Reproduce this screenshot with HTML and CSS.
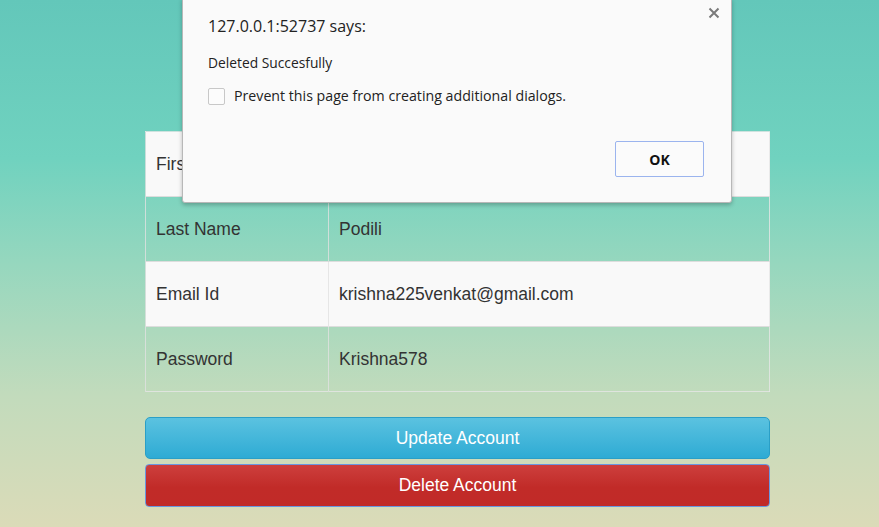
FILE: index.html
```html
<!DOCTYPE html>
<html>
<head>
<meta charset="utf-8">
<title>Account</title>
<link rel="stylesheet" href="styles.css">
</head>
<body>
<main class="page">
  <table class="details">
    <tbody>
      <tr><td class="label">First Name</td><td>Venkat Krishna</td></tr>
      <tr><td class="label">Last Name</td><td>Podili</td></tr>
      <tr><td class="label">Email Id</td><td>krishna225venkat@gmail.com</td></tr>
      <tr><td class="label">Password</td><td>Krishna578</td></tr>
    </tbody>
  </table>
  <div class="actions">
    <button class="btn btn-info">Update Account</button>
    <button class="btn btn-danger">Delete Account</button>
  </div>
</main>

<div class="dialog">
  <svg class="dialog-close" width="12" height="12" viewBox="0 0 12 12"><path d="M1.5 1.5 L10.5 10.5 M10.5 1.5 L1.5 10.5" stroke="#7a7a7a" stroke-width="2" fill="none"/></svg>
  <div class="dialog-title">127.0.0.1:52737 says:</div>
  <div class="dialog-message">Deleted Succesfully</div>
  <label class="dialog-check"><span class="box"></span><span>Prevent this page from creating additional dialogs.</span></label>
  <div class="dialog-footer"><button class="ok">OK</button></div>
</div>
</body>
</html>
```
FILE: styles.css
```css
html, body {
  margin: 0;
  height: 100%;
}
body {
  background: linear-gradient(180deg, #63c7ba 0%, #70d2bf 30%, #96d7be 50%, #c2dbbc 75%, #dbdbb8 100%);
  font-family: "Liberation Sans", Arial, sans-serif;
  color: #333;
  overflow: hidden;
}
.page {
  width: 625px;
  margin: 0 0 0 145px;
  padding-top: 131px;
}
.details {
  width: 625px;
  border-collapse: collapse;
  border: 1px solid rgba(230, 230, 230, 0.8);
  font-size: 17.5px;
}
.details td {
  height: 24px;
  line-height: 24px;
  padding: 20px 10px;
  border-top: 1px solid #ddd;
  border-left: 1px solid rgba(225, 225, 225, 0.8);
}
.details td.label {
  width: 162px;
}
.details tr:nth-child(odd) td {
  background: #f9f9f9;
}
.details tr:first-child td {
  border-top: 1px solid rgba(230,230,230,0.8);
}
.actions {
  display: flex;
  flex-direction: column;
  gap: 5px;
  margin-top: 25px;
}
.btn {
  height: 42px;
  width: 625px;
  border-radius: 5px;
  font-family: "Liberation Sans", Arial, sans-serif;
  font-size: 17.5px;
  color: #fff;
  padding: 0;
}
.btn-info {
  background: linear-gradient(180deg, #5bc2e0 0%, #2eabd4 100%);
  border: 1px solid #2a9fc7;
}
.btn-danger {
  background: linear-gradient(180deg, #cd3f3d 0%, #c12b28 55%, #c12a28 100%);
  border: 1px solid #6a97e0;
  border-radius: 4px;
  height: 43px;
}
.dialog {
  position: absolute;
  left: 182px;
  top: -2px;
  width: 548px;
  height: 203px;
  background: #fafafa;
  border: 1px solid #b8b8b8;
  border-radius: 0 0 3px 3px;
  box-shadow: 0 2px 4px rgba(0,0,0,0.25);
  font-family: "Open Sans", "Noto Sans", sans-serif;
  color: #222;
}
.dialog-close {
  position: absolute;
  right: 11px;
  top: 8px;
}
.dialog-title {
  margin: 15px 0 0 25px;
  font-size: 16px;
  line-height: 24px;
}
.dialog-message {
  margin: 15px 0 0 25px;
  font-size: 13.8px;
  line-height: 20px;
}
.dialog-check {
  display: flex;
  align-items: center;
  gap: 9px;
  margin: 13px 0 0 25px;
  font-size: 14.2px;
  line-height: 20px;
}
.dialog-check .box {
  width: 15px;
  height: 15px;
  border: 1px solid #c8c8c8;
  border-radius: 2px;
  background: #fcfcfc;
}
.dialog-footer {
  display: flex;
  justify-content: flex-end;
  margin: 35px 27px 0 0;
}
.ok {
  width: 89px;
  height: 36px;
  background: #fbfbfb;
  border: 1px solid #9bb4ee;
  border-radius: 2px;
  font-family: "Open Sans", "Noto Sans", sans-serif;
  font-weight: bold;
  font-size: 14px;
  color: #111;
}
```
